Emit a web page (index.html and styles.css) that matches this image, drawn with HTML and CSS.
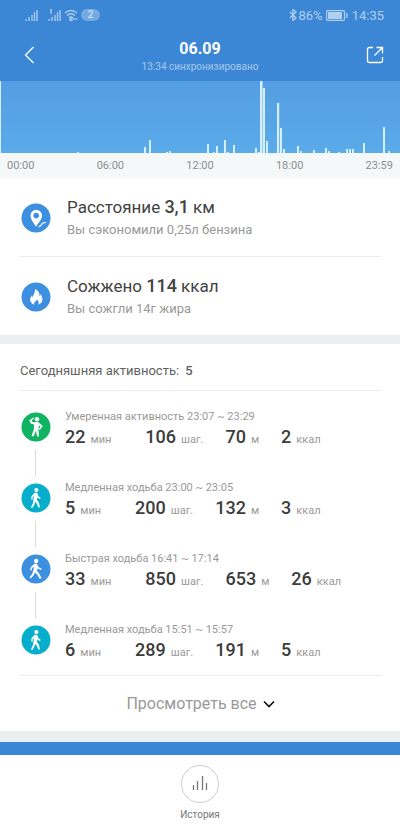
FILE: index.html
```html
<!DOCTYPE html>
<html lang="ru">
<head>
<meta charset="utf-8">
<meta name="viewport" content="width=device-width, initial-scale=1">
<title>Активность 06.09</title>
<link rel="stylesheet" href="styles.css">
</head>
<body>
<svg class="defs" aria-hidden="true">
  <symbol id="walker" viewBox="0 0 30 30">
    <circle cx="15.4" cy="7" r="2.1"/>
    <path d="M13.4 10.1Q15 9 16.5 10.2L17.3 13.1L19.7 14.8L19 16L16.3 14.5L16 17L18 20L18.9 24.2L17.2 24.6L16 20.9L14.2 18.8L13.6 21.2L11.4 25L9.9 24.2L11.8 20.5L12.7 15.6L12.7 12.9L11.8 14.1L11.5 16.8L10.2 16.6L10.5 13.2Z"/>
  </symbol>
</svg>
<header class="header">
  <div class="status">
    <div class="status-left">
      <svg class="signal" viewBox="0 0 13 12"><path d="M1 12v-2M4 12V8M7 12V6M9.500 12V3M12 12V1"/></svg>
      <svg class="signal second" viewBox="0 0 13 12"><path d="M1 12v-2M4 12V8M7 12V6M9.500 12V3M12 12V1M2 1h2M3 1v4"/></svg>
      <svg class="wifi" viewBox="0 0 14 12"><path d="M1 4Q7-1 13 4M3 6.500Q7 3 11 6.500M5 9Q7 7 9 9"/><circle cx="7" cy="10.700" r="1"/><path d="M10 11V9M12.500 9v2"/></svg>
      <span class="badge">2</span>
    </div>
    <div class="status-right">
      <svg class="bluetooth" viewBox="0 0 8 12"><path d="M1 3L7 9L4 11.500V.5L7 3L1 9"/></svg>
      <span>86%</span>
      <svg class="battery" viewBox="0 0 22 11"><rect x=".5" y=".5" width="18" height="10" rx="1.500"/><path class="charge" d="M2 2h14v7H2z"/><path d="M21 3v5"/></svg>
      <span>14:35</span>
    </div>
  </div>
  <div class="titlebar">
    <button class="icon-button" aria-label="Назад"><svg width="12" height="18" viewBox="0 0 12 18"><path d="M9.500 1L1.500 9L9.500 17"/></svg></button>
    <div class="heading">
      <h1>06.09</h1>
      <p>13:34 синхронизировано</p>
    </div>
    <button class="icon-button right" aria-label="Поделиться"><svg width="18" height="18" viewBox="0 0 18 18"><path d="M7 1.500H3.500Q1.500 1.500 1.500 3.500V14.500Q1.500 16.500 3.500 16.500H14.500Q16.500 16.500 16.500 14.500V11M10.500 1.500h6v6M16.500 1.500L8.500 9.500"/></svg></button>
  </div>
</header>
<main>
  <section class="chart" aria-label="Шаги за день">
    <svg class="bars" viewBox="0 0 400 72" preserveAspectRatio="none">
      <path d="M0 0h1v72H0zM77 71h2v1h-2zM144 66h2v6h-2zM149 59h2v13h-2zM166 71h2v1h-2zM169 70h2v2h-2zM207 63h2v9h-2zM213 71h2v1h-2zM216 65h2v7h-2zM224 59h2v13h-2zM227 71h2v1h-2zM233 64h2v8h-2zM255 67h2v5h-2zM258 71h2v1h-2zM260 0h2.500v72h-2.500zM263 7h2v65h-2zM266 60h2v12h-2zM277 22h2.200v50h-2.200zM280 47h2v25h-2zM283 68h2v4h-2zM297 65h2v7h-2zM300 70h2v2h-2zM313 69h2v3h-2zM325 67h2v5h-2zM328 70h2v2h-2zM338 71h2v1h-2zM346 68h2v4h-2zM349 68h2v4h-2zM352 68h2v4h-2zM363 62h2v10h-2zM383 46h2v26h-2zM388 70h2v2h-2z"/>
    </svg>
    <div class="axis"><span>00:00</span><span>06:00</span><span>12:00</span><span>18:00</span><span>23:59</span></div>
  </section>
  <section class="summary">
    <article class="fact">
      <svg class="disc blue" viewBox="0 0 30 30"><circle class="bg" cx="15" cy="15" r="14.500"/><path fill-rule="evenodd" d="M15 23.500C12 19.500 9.500 16 9.500 12.500A5.700 5.700 0 0 1 21 12.500C21 16 18 19.500 15 23.500ZM15.200 9.700a2.900 2.900 0 1 0 .01 0Z"/><path class="line" d="M17.500 23.500Q19.500 24 20.500 21.500Q21.500 19.500 25 19.500"/></svg>
      <div>
        <h2>Расстояние <b>3,1</b> км</h2>
        <p>Вы сэкономили 0,25л бензина</p>
      </div>
    </article>
    <article class="fact">
      <svg class="disc blue" viewBox="0 0 30 30"><circle class="bg" cx="15" cy="15" r="14.500"/><path d="M14 7C18 9 18.800 11.500 18.500 14.500Q19.500 13.500 19.300 12C22.500 16 22.200 20.500 17.500 22.800Q18.500 19.500 15.500 17.500Q15.500 19.500 13.500 20Q12.800 21.500 13.400 22.800C8.500 21 8 16.500 11 13.500Q11.500 15 12.200 15.500C12 12 14.500 10.500 14 7Z"/></svg>
      <div>
        <h2>Сожжено <b>114</b> ккал</h2>
        <p>Вы сожгли 14г жира</p>
      </div>
    </article>
  </section>
  <section class="activity">
    <h2 class="activity-title">Сегодняшняя активность: <b>5</b></h2>
    <ol class="list">
      <li>
        <svg class="disc green" viewBox="0 0 30 30"><circle class="bg" cx="15" cy="15" r="14.500"/><circle cx="16" cy="7.200" r="2.200"/><path d="M8.200 8.200L12.600 5.600L13.200 6.600L10.600 8.300L11.600 10.100L14 10.300Q17 9.500 18.300 11L21.800 14L18.800 18L17.800 17.300L19.600 14.400L18 13.500L17.400 17.500L18 24.500H16L15 18.500L12.500 24.500L10.600 24L12.900 17L13 12.400L9.800 11.600Z"/></svg>
        <div class="entry"><h3>Умеренная активность 23:07 ~ 23:29</h3>
        <div class="stats"><span><b>22</b> мин</span><span><b>106</b> шаг.</span><span><b>70</b> м</span><span><b>2</b> ккал</span></div></div>
      </li>
      <li>
        <svg class="disc cyan" viewBox="0 0 30 30"><circle class="bg" cx="15" cy="15" r="14.500"/><use href="#walker"/></svg>
        <div class="entry"><h3>Медленная ходьба 23:00 ~ 23:05</h3>
        <div class="stats"><span><b>5</b> мин</span><span><b>200</b> шаг.</span><span><b>132</b> м</span><span><b>3</b> ккал</span></div></div>
      </li>
      <li>
        <svg class="disc blue" viewBox="0 0 30 30"><circle class="bg" cx="15" cy="15" r="14.500"/><circle cx="15.200" cy="7" r="2.200"/><path d="M13.200 10Q15 9 16.300 10.500L17.700 13.200L20.600 14.500L20 15.900L16.600 14.500L15.900 16.800L18.200 19.800L20.500 24L18.800 25L16.500 20.900L14 18.500L12.700 21.200L9.800 24.500L8.500 23.200L11.200 20L12.600 15.500V12.800L11.300 13.800L10.400 16.500L9 16L10.100 12.700Z"/></svg>
        <div class="entry"><h3>Быстрая ходьба 16:41 ~ 17:14</h3>
        <div class="stats"><span><b>33</b> мин</span><span><b>850</b> шаг.</span><span><b>653</b> м</span><span><b>26</b> ккал</span></div></div>
      </li>
      <li>
        <svg class="disc cyan" viewBox="0 0 30 30"><circle class="bg" cx="15" cy="15" r="14.500"/><use href="#walker"/></svg>
        <div class="entry"><h3>Медленная ходьба 15:51 ~ 15:57</h3>
        <div class="stats"><span><b>6</b> мин</span><span><b>289</b> шаг.</span><span><b>191</b> м</span><span><b>5</b> ккал</span></div></div>
      </li>
    </ol>
    <button class="more">Просмотреть все <svg width="12" height="8" viewBox="0 0 12 8"><path d="M1 1.500L6 6.500L11 1.500"/></svg></button>
  </section>
  <div class="next-card"></div>
</main>
<footer class="footer">
  <button class="history">
    <svg width="38" height="38" viewBox="0 0 38 38"><circle cx="19" cy="19" r="18.500"/><path d="M12.500 25v-5M16.500 25v-9M21.500 25V11M25.500 25v-7"/></svg>
    История
  </button>
</footer>
</body>
</html>
```
FILE: styles.css
```css
* { box-sizing: border-box; }
body {
  margin: 0;
  background: #fff;
  color: #424242;
  font-family: Roboto, "Liberation Sans", sans-serif;
}
h1, h2, h3, p, ol { margin: 0; padding: 0; font-weight: 400; }
button { border: 0; padding: 0; background: none; font: inherit; color: inherit; }
svg { display: block; flex: none; }
.defs { position: absolute; width: 0; height: 0; }

.header { background: #3c87d5; color: #fff; height: 81px; }
.status {
  display: flex;
  justify-content: space-between;
  align-items: center;
  height: 30px;
  padding: 0 16px 0 25px;
  color: #b1cfee;
  font-size: 13px;
}
.status-left, .status-right { display: flex; align-items: center; }
.status-right { gap: 1px; }
.status svg { fill: none; stroke: currentColor; stroke-width: 1.3; }
.signal { width: 13px; height: 12px; }
.signal.second { margin-left: 10px; }
.wifi { width: 14px; height: 12px; margin: 0 3px; }
.badge {
  width: 19px;
  border-radius: 6px;
  background: #74a9e1;
  color: #e2effb;
  font-size: 10px;
  line-height: 12px;
  text-align: center;
}
.bluetooth { width: 8px; height: 12px; }
.battery { width: 22px; height: 11px; margin: 0 3px 0 2px; }
.battery .charge { fill: currentColor; stroke: none; }

.titlebar { display: flex; justify-content: space-between; padding: 0 16px 0 24px; }
.icon-button { display: flex; align-items: center; width: 32px; height: 50px; }
.icon-button.right { justify-content: flex-end; }
.icon-button svg { fill: none; stroke: #fff; stroke-width: 1.3; }
.heading { padding-top: 9px; margin-right: 8px; text-align: center; }
.heading h1 { font-size: 16px; font-weight: 700; line-height: 20px; }
.heading p { color: #a6c8ec; font-size: 10px; line-height: 16px; }

.bars {
  width: 100%;
  height: 72px;
  background: linear-gradient(#549de2, #5aabe9);
  fill: #d5effd;
}
.axis {
  display: flex;
  justify-content: space-between;
  height: 25px;
  padding: 0 7px;
  background: #f4f8f9;
  color: #8b8e90;
  font-size: 11px;
  line-height: 25px;
}

.disc { width: 30px; height: 30px; fill: #fff; }
.blue .bg { fill: #3d8fdf; }
.green .bg { fill: #0eb464; }
.cyan .bg { fill: #06aecb; }
.disc .line { fill: none; stroke: #fff; stroke-width: 1.2; }

.summary { padding: 0 19px 0 20px; }
.fact { display: flex; align-items: center; gap: 16px; height: 78px; padding: 1px 0 0 1px; }
.fact + .fact { height: 79px; border-top: 1px solid #ebebeb; }
.fact h2 { font-size: 17px; line-height: 24px; }
.fact b { font-size: 18px; font-weight: 500; }
.fact p { color: #999; font-size: 13px; line-height: 22px; }

.activity { border-top: 9px solid #ebeff0; padding: 0 19px 0 20px; }
.activity-title {
  border-bottom: 1px solid #ebebeb;
  color: #626262;
  font-size: 13px;
  line-height: 46px;
  padding-top: 4px;
  height: 47px;
}
.activity-title b { margin-left: 3px; font-weight: 500; }
.list { list-style: none; padding: 16px 0 0 1px; }
.list li { display: flex; gap: 14px; height: 71px; padding-top: 5px; position: relative; }
.list li:last-child { height: 55px; }
.list li:not(:last-child)::after {
  content: "";
  position: absolute;
  top: 43px;
  left: 14px;
  width: 1px;
  height: 26px;
  background: #dcdcdc;
}
.list h3 { color: #999; font-size: 11px; line-height: 12px; }
.entry { margin-top: -1px; }
.stats { display: flex; gap: 22px; color: #999; font-size: 11px; line-height: 28px; }
.stats span { display: flex; align-items: baseline; gap: 5px; }
.stats span:first-child { margin-right: 12px; }
.stats b { color: #3c3c3c; font-size: 18px; font-weight: 500; }
.more {
  display: flex;
  justify-content: center;
  align-items: center;
  gap: 6px;
  width: 100%;
  height: 56px;
  border-top: 1px solid #ebebeb;
  color: #999;
  font-size: 16px;
}
.more svg { fill: none; stroke: #111; stroke-width: 1.7; }

.next-card { height: 24px; border-top: 11px solid #ebeff0; background: #3c87d5; }
.footer { display: flex; justify-content: center; padding-top: 10px; }
.history {
  display: flex;
  flex-direction: column;
  align-items: center;
  gap: 6px;
  color: #777;
  font-size: 10px;
  line-height: 12px;
}
.history svg { fill: none; stroke: #777; stroke-width: 1.3; }
.history circle { stroke: #ccc; stroke-width: 1; }
```
